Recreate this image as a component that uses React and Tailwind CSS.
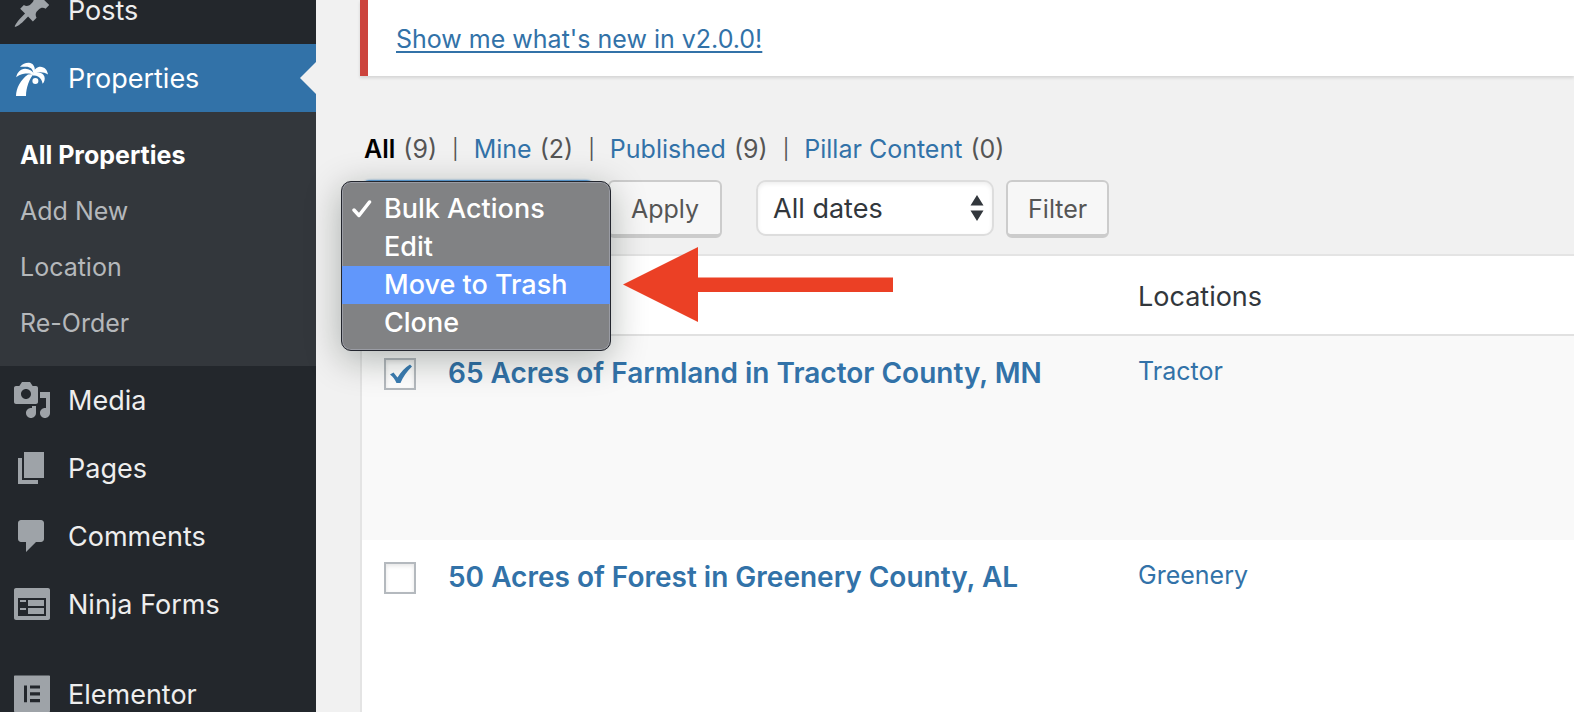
import { useState } from "react";

const PostIcon = () => (
  <path d="M10.44 3.02l1.82-1.82 6.36 6.35-1.83 1.82c-1.05-.68-2.48-.57-3.41.36l-.75.75c-.92.93-1.04 2.35-.35 3.41l-1.83 1.82-2.41-2.41-2.8 2.79c-.42.42-3.38 2.71-3.8 2.29s1.86-3.39 2.28-3.81l2.79-2.79L4.1 9.36l1.83-1.82c1.05.69 2.48.57 3.4-.36l.75-.75c.93-.92 1.05-2.35.36-3.41z" />
);

const PalmIcon = () => (
  <>
    {/* trunk */}
    <path d="M2 19C2.1 15 4.3 10.8 8 8.200L10.800 8C8.700 10.500 7.100 14.500 7 19Z" />
    {/* fronds */}
    <path d="M10.700 7.800C10.500 5.300 8.800 4.300 6.800 4.400C5.800 4.400 4.900 4.300 4 4.500C5.200 3 6.900 2.300 8.500 2.400C10.300 2.500 11.500 4 11.500 6.500Z" />
    <path d="M10.800 8.400C9 7.700 7.500 7.600 6 7.900C4.500 8.200 3.200 8.700 2.100 9.600C2.600 7.200 4.300 5.600 6.400 5.400C8.500 5.300 10.200 6.400 11 8Z" />
    <path d="M10.700 7.500C11.200 5.600 12.500 4.400 14.200 4.400C16.300 4.500 17.700 6 18 8.300C16.500 7.300 14.900 7 13.300 7.200C12.300 7.300 11.500 7.800 10.700 8.400Z" />
    <path d="M10.700 7.600C13.300 6.700 15.500 7.300 16.200 9.200C16.600 10.500 16.300 11.800 15.300 12.900C15 11 14.200 9.800 13 9.200C12.200 8.800 11.400 8.700 10.400 8.800Z" />
    <circle cx="11.700" cy="11.500" r="1.500" />
  </>
);

const MediaIcon = () => (
  <path d="M13 11V4c0-.55-.45-1-1-1h-1.67L9 1H5L3.67 3H2c-.55 0-1 .45-1 1v7c0 .55.45 1 1 1h10c.55 0 1-.45 1-1zM7 4.5c1.38 0 2.5 1.12 2.5 2.5S8.38 9.5 7 9.5 4.5 8.38 4.5 7 5.62 4.5 7 4.5zM14 6h5v10.5c0 1.38-1.12 2.5-2.5 2.5S14 17.88 14 16.5s1.12-2.5 2.5-2.5c.17 0 .34.02.5.05V9h-3V6zm-4 8.05V13h2v3.5c0 1.38-1.12 2.5-2.5 2.5S7 17.88 7 16.5 8.12 14 9.5 14c.17 0 .34.02.5.05z" />
);

const PagesIcon = () => <path d="M6 15V2h10v13H6zm-1 1h8v2H3V5h2v11z" />;

const CommentsIcon = () => (
  <path d="M4.500 2h10c.83 0 1.500.67 1.500 1.500v8c0 .83-.67 1.500-1.500 1.500H12l-5 5v-5H4.500c-.83 0-1.500-.67-1.500-1.500v-8C3 2.670 3.670 2 4.500 2z" />
);

const FormsIcon = () => (
  <path d="M2 2h16c.55 0 1 .45 1 1v14c0 .55-.45 1-1 1H2c-.55 0-1-.45-1-1V3c0-.55.45-1 1-1zm15 14V7H3v9h14zM4 8v1h3V8H4zm4 0v3h8V8H8zm-4 4v1h3v-1H4zm4 0v3h8v-3H8z" />
);

const ElementorIcon = () => (
  <path
    fillRule="evenodd"
    d="M1.500 .8h17c.3 0 .5.200.5.500v17.200c0 .3-.2.500-.5.500h-17c-.3 0-.5-.2-.5-.5V1.300c0-.3.2-.5.5-.5zM6 5.700v8.400h1.500V5.700zM9 5.700v1.600h5V5.700zM9 9.100v1.600h5V9.100zM9 12.500v1.600h5v-1.600z"
  />
);

const submenu = ["All Properties", "Add New", "Location", "Re-Order"];

const views = [
  { label: "All", count: 9, current: true },
  { label: "Mine", count: 2 },
  { label: "Published", count: 9 },
  { label: "Pillar Content", count: 0 },
];

const bulkActions = ["Bulk Actions", "Edit", "Move to Trash", "Clone"];

const properties = [
  { id: 1, title: "65 Acres of Farmland in Tractor County, MN", location: "Tractor", checked: true },
  { id: 2, title: "50 Acres of Forest in Greenery County, AL", location: "Greenery" },
];

function NavItem({ icon: Icon, label, active }) {
  return (
    <a
      href="#"
      className={
        active
          ? "relative flex h-[68px] items-center gap-4 bg-[#3272a8] pl-3 text-white"
          : "flex h-[68px] items-center gap-4 pl-3 text-[#eee]"
      }
    >
      <svg
        viewBox="0 0 20 20"
        aria-hidden="true"
        className={active ? "size-10 shrink-0 fill-white" : "size-10 shrink-0 fill-[#9ea3a8]"}
      >
        <Icon />
      </svg>
      <span className="pt-0.5">{label}</span>
      {active && (
        <span className="absolute top-[18px] right-0 border-y-16 border-r-16 border-y-transparent border-r-[#f1f1f1]" />
      )}
    </a>
  );
}

function Sidebar() {
  return (
    <nav className="w-[316px] shrink-0 bg-[#23272c] text-[27px]">
      <div className="-mt-6">
        <NavItem icon={PostIcon} label="Posts" />
        <NavItem icon={PalmIcon} label="Properties" active />
        <ul className="bg-[#33373c] pt-4 pb-3.5 text-[25px]">
          {submenu.map((item, i) => (
            <li key={item}>
              <a
                href="#"
                className={
                  i === 0
                    ? "flex h-14 items-center pl-5 font-bold text-white"
                    : "flex h-14 items-center pl-5 text-[#b5b8bb]"
                }
              >
                {item}
              </a>
            </li>
          ))}
        </ul>
        <NavItem icon={MediaIcon} label="Media" />
        <NavItem icon={PagesIcon} label="Pages" />
        <NavItem icon={CommentsIcon} label="Comments" />
        <NavItem icon={FormsIcon} label="Ninja Forms" />
        <div className="h-[22px]" />
        <NavItem icon={ElementorIcon} label="Elementor" />
      </div>
    </nav>
  );
}

function BulkMenu({ selected, onSelect }) {
  return (
    <ul
      role="listbox"
      aria-label="Bulk actions"
      className="absolute top-px -left-[19px] z-10 w-[270px] rounded-[10px] border border-[#23262e] bg-[#818284] py-2 text-[27px] font-medium text-white shadow-[0_8px_36px_rgba(0,20,10,0.3)] inset-ring inset-ring-[#9a9ca4]"
    >
      {bulkActions.map((action) => (
        <li key={action} role="option" aria-selected={action === selected}>
          <button
            type="button"
            onClick={() => onSelect(action)}
            className={
              action === "Move to Trash"
                ? "flex h-[38px] w-full items-center bg-[#6197fb] pl-2.5"
                : "flex h-[38px] w-full items-center pl-2.5"
            }
          >
            <span className="w-8">
              {action === selected && (
                <svg viewBox="0 0 20 20" aria-hidden="true" className="size-5 fill-none stroke-white stroke-[3.5]">
                  <path d="M2 11L7 16.500L17.500 3" strokeLinecap="round" strokeLinejoin="round" />
                </svg>
              )}
            </span>
            {action}
          </button>
        </li>
      ))}
    </ul>
  );
}

function Toolbar() {
  const [bulk, setBulk] = useState("Bulk Actions");
  const button = "h-[58px] rounded-md border-2 border-b-4 border-[#ccc] bg-[#f7f7f7] pt-1 text-[25px] text-[#555]";

  return (
    <div className="relative flex items-start">
      <select
        aria-label="Select bulk action"
        value={bulk}
        onChange={(e) => setBulk(e.target.value)}
        className="h-14 w-[236px] appearance-none rounded-[10px] border-2 border-[#5b9dd9] bg-white px-4 text-[27px] text-[#32373c] shadow-[0_0_2px_#5b9dd9]"
      >
        {bulkActions.map((action) => (
          <option key={action}>{action}</option>
        ))}
      </select>
      <BulkMenu selected={bulk} onSelect={setBulk} />
      <button type="button" className={`ml-3 px-[21px] ${button}`}>
        Apply
      </button>
      <div className="relative ml-[34px]">
        <select
          aria-label="Filter by date"
          className="h-14 w-[238px] appearance-none rounded-[10px] border-2 border-[#ddd] bg-white px-[15px] pt-0.5 text-[27px] text-[#32373c] inset-shadow-[0_2px_4px_rgba(0,0,0,0.07)]"
        >
          <option>All dates</option>
        </select>
        <svg
          viewBox="0 0 14 26"
          aria-hidden="true"
          className="pointer-events-none absolute top-[15px] right-2.5 h-[26px] w-3.5 fill-[#32373c]"
        >
          <path d="M7 0L13.500 10.500H.5zM.5 15.500h13L7 26z" />
        </svg>
      </div>
      <button type="button" className={`ml-3 px-5 ${button}`}>
        Filter
      </button>
      <svg
        viewBox="0 0 270 76"
        aria-hidden="true"
        className="absolute top-[67px] left-[263px] z-20 h-[76px] w-[270px] fill-[#eb4025]"
      >
        <path d="M0 37.500L75 0V30.500H270V45H75V75Z" />
      </svg>
    </div>
  );
}

function PropertiesTable() {
  return (
    <table className="w-full table-fixed border-2 border-r-0 border-[#e4e4e4] bg-white text-left">
      <thead>
        <tr className="h-20 border-b-2 border-[#e1e1e1] text-[27px] text-[#32373c]">
          <th className="w-[67px]" aria-label="Select" />
          <th className="w-[690px]" aria-label="Title" />
          <th className="pt-1 pl-5 font-normal">Locations</th>
        </tr>
      </thead>
      <tbody>
        {properties.map((property) => (
          <tr key={property.id} className="h-[205px] align-top odd:bg-[#f9f9f9]">
            <td className="pt-[22px] pl-[22px]">
              <div className="relative size-8">
                <input
                  type="checkbox"
                  aria-label={`Select ${property.title}`}
                  defaultChecked={property.checked}
                  className="peer block size-8 appearance-none border-2 border-[#b4b9be] bg-white inset-shadow-[0_2px_4px_rgba(0,0,0,0.1)]"
                />
                <svg
                  viewBox="0 0 32 32"
                  aria-hidden="true"
                  className="pointer-events-none absolute inset-0 hidden fill-[#3b7db3] peer-checked:block"
                >
                  <path d="M6 16.500L9.500 14.500L13.500 19.500C17 14 21 9.500 26 6.500L28 8.500C23 13 19 19 16.500 25H12.500C11 21.500 9 18.500 6 16.500Z" />
                </svg>
              </div>
            </td>
            <td className="pt-[19px] pl-5">
              <a href="#" className="block text-[28px] leading-9 font-semibold text-[#3272a8]">
                {property.title}
              </a>
            </td>
            <td className="pt-[19px] pl-5">
              <a href="#" className="block text-[25px] leading-8 text-[#3272a8]">
                {property.location}
              </a>
            </td>
          </tr>
        ))}
      </tbody>
    </table>
  );
}

export default function App() {
  return (
    <div className="flex h-screen overflow-hidden bg-[#f1f1f1] font-['Inter','Liberation_Sans',sans-serif]">
      <Sidebar />
      <main className="min-w-0 flex-1 pl-11">
        <div className="flex h-[76px] items-center border-l-8 border-[#cc443d] bg-white pt-1 pl-7 shadow-[0_2px_3px_rgba(0,0,0,0.12)]">
          <a href="#" className="text-[25px] text-[#3272a8] underline decoration-2 underline-offset-3">
            Show me what's new in v2.0.0!
          </a>
        </div>
        <ul className="mt-14 flex h-12 pt-px pl-1 text-[25px] leading-8 text-[#555]">
          {views.map((view, i) => (
            <li key={view.label} className="flex">
              {i > 0 && <span className="px-[15px] text-xl leading-8">|</span>}
              <a href="#" className={view.current ? "font-semibold text-black" : "text-[#3272a8]"}>
                {view.label}
              </a>
              <span className="pl-2">({view.count})</span>
            </li>
          ))}
        </ul>
        <Toolbar />
        <div className="mt-4">
          <PropertiesTable />
        </div>
      </main>
    </div>
  );
}
